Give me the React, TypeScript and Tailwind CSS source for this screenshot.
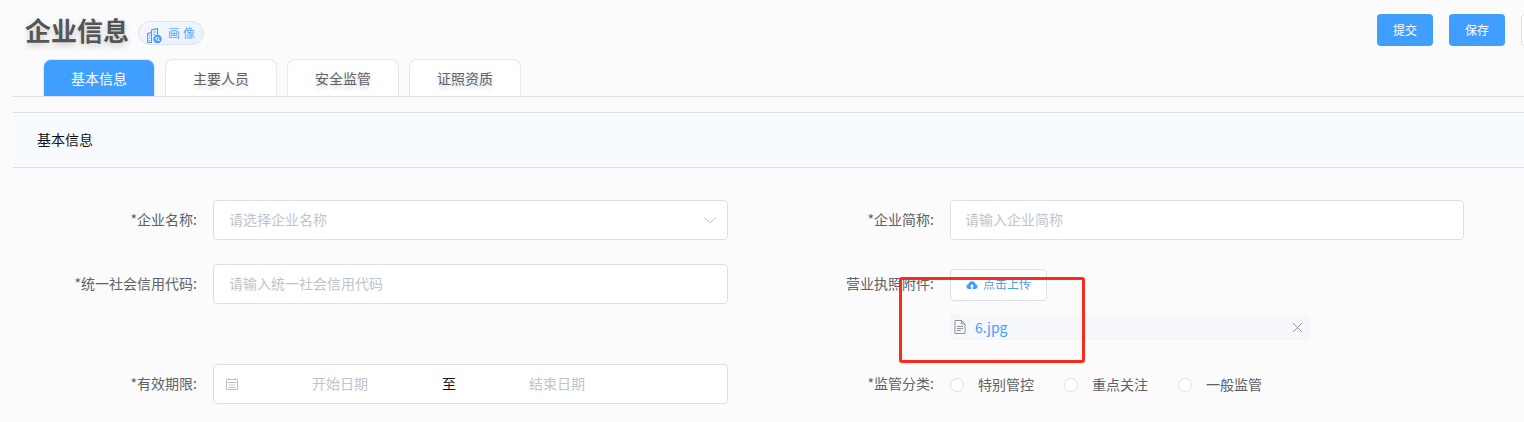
import { ReactNode } from 'react';

const font = "font-['Noto_Sans_CJK_SC','Liberation_Sans',sans-serif]";

function Label({ children }: { children: ReactNode }) {
  return <label className="w-[185px] shrink-0 pr-[1px] text-right text-[14px] leading-[38px] text-[#606266]">{children}</label>;
}

function Box({ children, narrow }: { children: ReactNode; narrow?: boolean }) {
  return (
    <div
      className={
        narrow
          ? 'ml-[15px] flex h-10 w-[514px] shrink-0 items-center rounded border border-[#dcdfe6] bg-white text-[14px] text-[#c0c4cc]'
          : 'ml-[15px] flex h-10 w-[515px] shrink-0 items-center rounded border border-[#dcdfe6] bg-white text-[14px] text-[#c0c4cc]'
      }
    >
      {children}
    </div>
  );
}

function Radio({ text }: { text: string }) {
  return (
    <div className="flex w-[114px] items-center">
      <span className="mt-[2px] h-[14px] w-[14px] rounded-full border border-[#dcdfe6] bg-white" />
      <span className="ml-[14px] text-[14px] text-[#606266]">{text}</span>
    </div>
  );
}

function Tab({ text, active }: { text: string; active?: boolean }) {
  return (
    <div
      className={
        active
          ? 'flex h-[37px] w-[112px] items-center justify-center rounded-t-lg border border-b-0 border-[#e4e7ed] bg-[#409eff] text-[14px] text-white'
          : 'flex h-[37px] w-[112px] items-center justify-center rounded-t-lg border border-b-0 border-[#e4e7ed] bg-white text-[14px] text-[#606266] [text-shadow:0_3px_4px_rgba(0,0,0,0.18)]'
      }
    >
      {text}
    </div>
  );
}

export default function App() {
  return (
    <div className={`relative h-[422px] w-[1524px] overflow-hidden bg-[#fbfbfc] pl-[13px] ${font}`}>
      <div className="flex h-[59px] items-start">
        <h1 className="ml-[12px] mt-[12px] text-[26px] font-bold leading-[36px] text-[#555555] [text-shadow:0_3px_6px_rgba(0,0,0,0.2)]">企业信息</h1>
        <div className="ml-[9px] mt-[21px] flex h-[24px] w-[66px] items-center rounded-full border border-[#dbe3f1] bg-gradient-to-br from-[#f6f8fe] to-[#e8effc] pl-[8px]">
          <svg className="mt-[4px] shrink-0" width="15" height="15" viewBox="0 0 15 15" fill="none" stroke="#409eff" strokeWidth="1.100">
            <path d="M.600 14.500V5.500L4.500 4.500V14.500H.600Z" />
            <path d="M4.500 4.500V2L10.500 .600V7" />
            <path d="M2 7.500H3.200M2 10H3.200M2 12.500H3.200M6.500 4H8.500M6.500 6.500H8" />
            <circle cx="10.500" cy="11" r="3.600" fill="#409eff" />
            <circle cx="10.300" cy="10.800" r="1.500" stroke="#e8effc" />
            <path d="M11.500 12L12.600 13" stroke="#e8effc" />
          </svg>
          <span className="ml-[6px] text-[12px] tracking-[3px] text-[#5ea8f5]">画像</span>
        </div>
        <div className="-mr-[53px] ml-auto mt-[14px] flex shrink-0 gap-4">
          <button className="h-8 w-14 rounded bg-[#409eff] text-[12px] text-white">提交</button>
          <button className="h-8 w-14 rounded bg-[#409eff] text-[12px] text-white">保存</button>
          <button className="h-8 w-14 rounded border border-[#dcdfe6] bg-white" />
        </div>
      </div>

      <div className="flex h-[38px] gap-[10px] border-b border-[#dcdfe6] pl-[30px]">
        <Tab text="基本信息" active />
        <Tab text="主要人员" />
        <Tab text="安全监管" />
        <Tab text="证照资质" />
      </div>

      <div className="mt-[15px] flex h-[56px] items-center border-y border-[#dcdfe6] bg-[#f7faff] pb-[2px] pl-[24px] text-[14px] text-[#111111]">基本信息</div>

      <div className="mt-[32px] grid grid-cols-[737px_1fr] gap-y-[24px]">
        <div className="flex">
          <Label>*企业名称:</Label>
          <Box>
            <span className="ml-[15px] flex-1 pb-[2px]">请选择企业名称</span>
            <svg className="mr-[10px]" width="14" height="14" viewBox="0 0 14 14" fill="none" stroke="#c0c4cc" strokeWidth="1">
              <path d="M1.500 4.500L7 10L12.500 4.500" />
            </svg>
          </Box>
        </div>
        <div className="flex">
          <Label>*企业简称:</Label>
          <Box narrow>
            <span className="ml-[14px] pb-[2px]">请输入企业简称</span>
          </Box>
        </div>

        <div className="flex">
          <Label>*统一社会信用代码:</Label>
          <Box>
            <span className="ml-[15px] pb-[2px]">请输入统一社会信用代码</span>
          </Box>
        </div>
        <div className="flex h-[76px]">
          <Label>营业执照附件:</Label>
          <div className="ml-[15px] w-[360px] pt-[5px]">
            <button className="flex h-8 w-[97px] items-center justify-center rounded border border-[#dcdfe6] bg-white text-[12px] text-[#409eff]">
              <svg width="12" height="12" viewBox="0 0 12 12" fill="#409eff">
                <path d="M3 10C1.400 10 .500 8.900 .500 7.600C.500 6.400 1.300 5.500 2.400 5.300C2.700 3.500 4.200 2.300 6 2.300C7.800 2.300 9.300 3.500 9.600 5.300C10.700 5.500 11.500 6.400 11.500 7.600C11.500 8.900 10.600 10 9 10H6.800V7.400H8.200L6 5L3.800 7.400H5.200V10H3Z" />
              </svg>
              <span className="ml-[5px] pb-[2px]">点击上传</span>
            </button>
            <div className="mt-[13px] flex h-[26px] items-center rounded bg-[#f5f7fa] pl-[4px] pr-[7px]">
              <svg width="12" height="14" viewBox="0 0 12 14" fill="none" stroke="#909399" strokeWidth="1">
                <path d="M1 .500H7.500L11 4V13.500H1V.500Z" />
                <path d="M7.500 .500V4H11M3 6.500H9M3 8.500H9M3 10.500H7" />
              </svg>
              <span className="ml-[9px] flex-1 text-[14px] text-[#409eff]">6.jpg</span>
              <svg width="11" height="11" viewBox="0 0 11 11" fill="none" stroke="#909399" strokeWidth="1">
                <path d="M1 1L10 10M10 1L1 10" />
              </svg>
            </div>
          </div>
        </div>

        <div className="flex">
          <Label>*有效期限:</Label>
          <Box>
            <svg className="ml-[11px] shrink-0" width="14" height="14" viewBox="0 0 14 14" fill="none" stroke="#c0c4cc" strokeWidth="1">
              <path d="M1.500 2.500H12.500V12.500H1.500V2.500ZM1.500 5.500H12.500M4 1V3M10 1V3M3.500 8H10.500M3.500 10.500H10.500" />
            </svg>
            <span className="ml-[73px] w-[56px] shrink-0 pb-[2px]">开始日期</span>
            <span className="ml-[74px] w-[14px] shrink-0 pb-[2px] text-[#111111]">至</span>
            <span className="ml-[73px] w-[56px] shrink-0 pb-[2px]">结束日期</span>
          </Box>
        </div>
        <div className="flex">
          <Label>*监管分类:</Label>
          <div className="ml-[15px] flex items-center">
            <Radio text="特别管控" />
            <Radio text="重点关注" />
            <Radio text="一般监管" />
          </div>
        </div>
      </div>

      <div className="absolute left-[899px] top-[277px] h-[86px] w-[186px] rounded-[3px] border-[3px] border-[#fb2a1e]" />
    </div>
  );
}
